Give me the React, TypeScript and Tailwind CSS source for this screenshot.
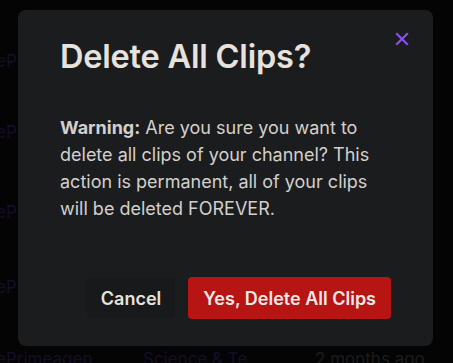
import React from 'react';

export default function App() {
  return (
    <div className="relative w-[453px] h-[363px] overflow-hidden bg-[#040404] font-['Inter',sans-serif]">
      {/* Page behind the overlay, peeking out at the left edge */}
      <div className="absolute left-0 top-0 w-[18px] h-[340px] overflow-hidden text-[17px] text-[#150e28]">
        <div className="absolute left-[-4px] top-[49px] whitespace-nowrap">ePr</div>
        <div className="absolute left-[-4px] top-[120px] whitespace-nowrap">ePr</div>
        <div className="absolute left-[-4px] top-[200px] whitespace-nowrap">ePr</div>
        <div className="absolute left-[-4px] top-[275px] whitespace-nowrap">ePr</div>
      </div>
      <div className="absolute left-[-4px] top-[347px] flex w-[470px] text-[17px] whitespace-nowrap">
        <span className="w-[147px] text-[#150e28]">ePrimeagen</span>
        <span className="w-[172px] text-[#150e28]">Science &amp; Te</span>
        <span className="text-[#1c1c1e]">2 months ago</span>
      </div>

      {/* Modal */}
      <div className="absolute left-[18px] top-[10px] w-[415px] h-[336px] rounded-lg bg-[#1b1c1e] px-[42px] pt-[26px] flex flex-col">
        <button className="absolute right-[24px] top-[22px] text-[#8b4ef0]">
          <svg width="14" height="14" viewBox="0 0 14 14" fill="none" stroke="currentColor" strokeWidth="2.2" strokeLinecap="square">
            <path d="M2 2L12 12M12 2L2 12" />
          </svg>
        </button>
        <h2 className="text-[32.5px] font-semibold leading-[42px] tracking-[-0.2px] text-[#e6e3de]">Delete All Clips?</h2>
        <p className="mt-[36px] text-[18px] leading-[27px] text-[#d2d0cc]">
          <b className="font-bold">Warning:</b> Are you sure you want to delete all clips of your channel? This action is permanent, all of your clips will be deleted FOREVER.
        </p>
        <div className="mt-auto mb-[27px] flex justify-end items-center gap-[13px]">
          <button className="h-[40px] px-[14px] rounded bg-[#18191b] text-[18px] font-semibold text-[#e6e3de]">Cancel</button>
          <button className="h-[42px] px-[15px] rounded bg-[#b71414] text-[18px] font-semibold text-[#f0e9e6]">Yes, Delete All Clips</button>
        </div>
      </div>
    </div>
  );
}
